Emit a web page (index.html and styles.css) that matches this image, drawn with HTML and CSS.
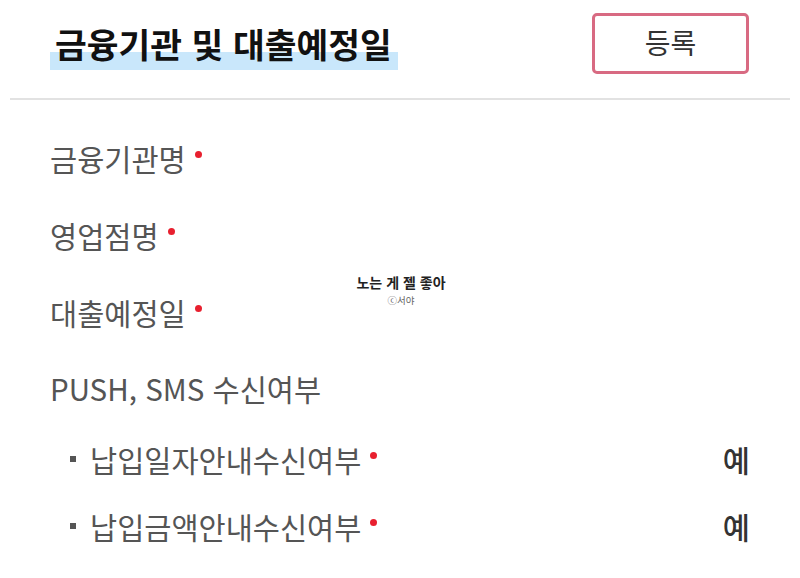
FILE: index.html
```html
<!DOCTYPE html>
<html lang="ko">
<head>
<meta charset="utf-8">
<link rel="stylesheet" href="styles.css">
</head>
<body>
<div class="page">
  <header class="head">
    <h1 class="title"><span class="hl">금융기관 및 대출예정일</span></h1>
    <button class="btn">등록</button>
  </header>
  <hr class="divider">
  <ul class="fields">
    <li class="row">금융기관명<i class="req"></i></li>
    <li class="row">영업점명<i class="req"></i></li>
    <li class="row">대출예정일<i class="req"></i></li>
    <li class="row group">PUSH, SMS 수신여부</li>
    <li class="row sub"><span class="sq"></span>납입일자안내수신여부<i class="req"></i><span class="val">예</span></li>
    <li class="row sub"><span class="sq"></span>납입금액안내수신여부<i class="req"></i><span class="val">예</span></li>
  </ul>
  <div class="mark">
    <div class="mark-main">노는 게 젤 좋아</div>
    <div class="mark-sub">ⓒ서야</div>
  </div>
</div>
</body>
</html>
```
FILE: styles.css
```css
* { box-sizing: border-box; }
html, body { margin: 0; padding: 0; background: #fff; }
body {
  font-family: "Noto Sans CJK KR", "Noto Sans", sans-serif;
  color: #555;
}
.page { position: relative; width: 800px; height: 578px; overflow: hidden; }
.head {
  display: flex;
  justify-content: space-between;
  align-items: center;
  padding: 13px 51px 0 50px;
  height: 74px;
}
.title {
  margin: 0;
  font-size: 34.5px;
  font-weight: 700;
  color: #111;
  line-height: 1;
}
.hl {
  position: relative;
  z-index: 0;
  display: inline-block;
  padding: 0 6px 0 5px;
}
.hl::before {
  content: "";
  position: absolute;
  left: 0; right: 0;
  top: 26px;
  height: 18px;
  background: #c9e7fb;
  z-index: -1;
}
.btn {
  width: 157px;
  height: 61px;
  border: 3px solid #d86a82;
  border-radius: 5px;
  background: #fff;
  font-family: inherit;
  font-size: 28px;
  color: #333;
  padding: 0 0 4px;
}
.divider {
  margin: 24px 10px 0;
  border: 0;
  border-top: 2px solid #e2e2e2;
}
.fields { list-style: none; margin: 0; padding: 19px 50px 0; }
.row {
  display: flex;
  align-items: center;
  font-size: 29.5px;
  height: 77px;
  color: #555;
}
.row.group { height: 75px; }
.row.sub { height: 67px; padding-left: 20px; }
.req {
  display: inline-block;
  width: 7px; height: 7px;
  border-radius: 50%;
  background: #e8202f;
  margin-left: 9px;
  margin-top: -6px;
}
.sq {
  width: 6px; height: 6px;
  background: #555;
  margin-right: 14px;
}
.val { margin-left: auto; color: #333; font-weight: 500; }
.mark {
  position: absolute;
  left: 354px; top: 272px;
  text-align: center;
  width: 94px;
}
.mark-main { font-size: 14px; font-weight: 700; color: #222; line-height: 20px; }
.mark-sub { font-size: 9.5px; color: #666; line-height: 16px; }
```
